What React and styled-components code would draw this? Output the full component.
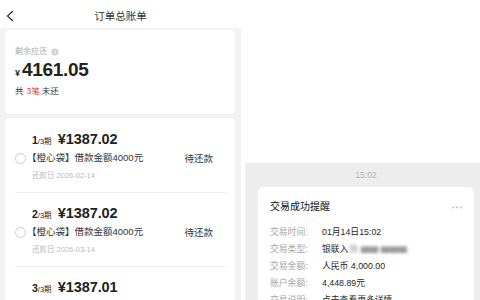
import React from 'react';
import styled, {createGlobalStyle} from 'styled-components';

const GlobalStyle = createGlobalStyle`
  html, body {
    margin: 0;
    padding: 0;
    background: #ffffff;
  }

  body {
    font-family: "Liberation Sans", "Noto Sans CJK SC", sans-serif;
    color: #333;
  }
`

const Page = styled.div`
  display: flex;
  width: 480px;
  height: 300px;
  overflow: hidden;
  background: #fff;
`

const BillPanel = styled.div`
  width: 241px;
  flex-shrink: 0;
  display: flex;
  flex-direction: column;
  background: #f3f3f3;
  overflow: hidden;
`

const Header = styled.div`
  display: grid;
  grid-template-columns: 28px 1fr 28px;
  align-items: center;
  height: 28px;
  flex-shrink: 0;
  background: #fff;

  .back {
    display: flex;
    padding-left: 6px;
    padding-top: 4px;
  }
`

const Title = styled.div`
  text-align: center;
  font-size: 10.5px;
  color: #333;
  line-height: 14px;
  padding-top: 4px;
`

const Body = styled.div`
  display: flex;
  flex-direction: column;
  gap: 4px;
  flex-shrink: 0;
  padding: 2px 6px 0 5px;
`

const Card = styled.div`
  background: #fff;
  border-radius: 5px;
  padding: ${p => p.$pad || '0 10px'};
`

const SummaryLabel = styled.div`
  display: flex;
  align-items: center;
  gap: 4px;
  padding-top: 16px;
  height: 12px;
  line-height: 12px;
  font-size: 8px;
  color: #aaa;
`

const Amount = styled.div`
  display: flex;
  align-items: baseline;
  margin-top: 1px;
  height: 22px;
  line-height: 22px;
  font-weight: 700;
  color: #222;

  .cur {
    font-size: 9px;
    margin-right: 2px;
  }

  .num {
    font-size: 19px;
    letter-spacing: -0.3px;
  }
`

const Unpaid = styled.div`
  margin-top: 4px;
  padding-bottom: 17px;
  height: 12px;
  line-height: 12px;
  font-size: 8.5px;
  color: #333;

  em {
    font-style: normal;
    color: #e8383d;
    margin: 0 2px 0 3px;
  }
`

const Item = styled.div`
  display: flex;
  align-items: center;
  padding: 12px 0 10px;
  border-bottom: 1px solid #efefef;
`

const Radio = styled.span`
  width: 9px;
  height: 9px;
  border: 1px solid #cfcfcf;
  border-radius: 50%;
  flex-shrink: 0;
  margin-right: 6px;
  margin-top: 3px;
`

const ItemMain = styled.div`
  flex: 1;
  display: flex;
  flex-direction: column;
`

const Period = styled.div`
  display: flex;
  align-items: baseline;
  height: 16px;
  line-height: 16px;
  color: #222;

  .idx {
    font-size: 10.5px;
    font-weight: 700;
  }

  .tot {
    font-size: 7.5px;
    width: 20px;
  }

  .money {
    font-size: 14.5px;
    font-weight: 700;
    letter-spacing: -0.1px;
  }
`

const Desc = styled.div`
  margin: 4px 0 0 -5px;
  height: 14px;
  line-height: 14px;
  font-size: 9.5px;
  color: #333;
`

const DueDate = styled.div`
  margin-top: 5px;
  height: 12px;
  line-height: 12px;
  font-size: 7.5px;
  color: #bbb;
`

const Status = styled.div`
  font-size: 9.5px;
  color: #333;
  margin: 3px 14px 0 0;
`

const ChatPanel = styled.div`
  flex: 1;
  display: flex;
  flex-direction: column;
  margin-left: 4px;
  overflow: hidden;
`

const TopBlank = styled.div`
  height: 163px;
  flex-shrink: 0;
  background: #fff;
`

const ChatArea = styled.div`
  flex: 1;
  flex-shrink: 0;
  background: #ededed;
  padding: 6px 6px 0 13px;
`

const Time = styled.div`
  text-align: center;
  font-size: 8.5px;
  line-height: 12px;
  color: #b3b3b3;
`

const Notice = styled.div`
  margin-top: 6px;
  background: #fff;
  border-radius: 5px;
  padding: 13px 12px 10px;
`

const NoticeHead = styled.div`
  display: flex;
  justify-content: space-between;
  align-items: center;
  height: 14px;
  line-height: 14px;
  margin-bottom: 10px;

  .title {
    font-size: 10px;
    color: #111;
  }
`

const Row = styled.div`
  display: flex;
  height: 17px;
  line-height: 17px;
  font-size: 8.8px;

  .k {
    width: 52px;
    flex-shrink: 0;
    color: #a6a6a6;
  }

  .v {
    color: #1f1f1f;
    white-space: nowrap;
  }
`

const Blurred = styled.span`
  display: inline-block;
  filter: blur(1.6px);
  color: #9a9a9a;
  margin-left: 1px;
`

const InfoIcon = () => (
    <svg width="8" height="8" viewBox="0 0 8 8">
        <circle cx="4" cy="4" r="3.6" fill="#d0d0d0"/>
        <rect x="3.5" y="3.3" width="1" height="2.7" fill="#fff"/>
        <rect x="3.5" y="1.9" width="1" height="0.9" fill="#fff"/>
    </svg>
)

const Dots = () => (
    <svg width="10" height="3" viewBox="0 0 10 3">
        <circle cx="1.3" cy="1.5" r="1" fill="#bdbdbd"/>
        <circle cx="5" cy="1.5" r="1" fill="#bdbdbd"/>
        <circle cx="8.7" cy="1.5" r="1" fill="#bdbdbd"/>
    </svg>
)

const installments = [
    {idx: 1, money: '¥1387.02', date: '2026-02-14'},
    {idx: 2, money: '¥1387.02', date: '2026-03-14'},
    {idx: 3, money: '¥1387.01', date: '2026-04-14'},
]

const rows = [
    ['交易时间:', '01月14日15:02'],
    ['交易类型:', 'blur'],
    ['交易金额:', '人民币 4,000.00'],
    ['账户余额:', '4,448.89元'],
    ['交易说明:', '点击查看更多详情'],
]

const App = () => (
    <Page>
        <GlobalStyle/>
        <BillPanel>
            <Header>
                <span className="back">
                    <svg width="9" height="12" viewBox="0 0 9 12">
                        <polyline points="7,1 1.5,6 7,11" fill="none" stroke="#333" strokeWidth="1.3"/>
                    </svg>
                </span>
                <Title>订单总账单</Title>
                <span/>
            </Header>
            <Body>
                <Card>
                    <SummaryLabel>剩余应还 <InfoIcon/></SummaryLabel>
                    <Amount><span className="cur">¥</span><span className="num">4161.05</span></Amount>
                    <Unpaid>共<em>3笔</em>未还</Unpaid>
                </Card>
                <Card $pad="1px 8px 0 10px">
                    {installments.map(it => (
                        <Item key={it.idx}>
                            <Radio/>
                            <ItemMain>
                                <Period>
                                    <span className="idx">{it.idx}</span>
                                    <span className="tot">/3期</span>
                                    <span className="money">{it.money}</span>
                                </Period>
                                <Desc>【橙心袋】借款金额4000元</Desc>
                                <DueDate>还款日 {it.date}</DueDate>
                            </ItemMain>
                            <Status>待还款</Status>
                        </Item>
                    ))}
                </Card>
            </Body>
        </BillPanel>
        <ChatPanel>
            <TopBlank/>
            <ChatArea>
                <Time>15:02</Time>
                <Notice>
                    <NoticeHead>
                        <span className="title">交易成功提醒</span>
                        <Dots/>
                    </NoticeHead>
                    {rows.map(([k, v]) => (
                        <Row key={k}>
                            <span className="k">{k}</span>
                            {v === 'blur' ? (
                                <span className="v">银联入<Blurred>账 ▆▆ ▆▆▆</Blurred></span>
                            ) : (
                                <span className="v">{v}</span>
                            )}
                        </Row>
                    ))}
                </Notice>
            </ChatArea>
        </ChatPanel>
    </Page>
)

export default App;
